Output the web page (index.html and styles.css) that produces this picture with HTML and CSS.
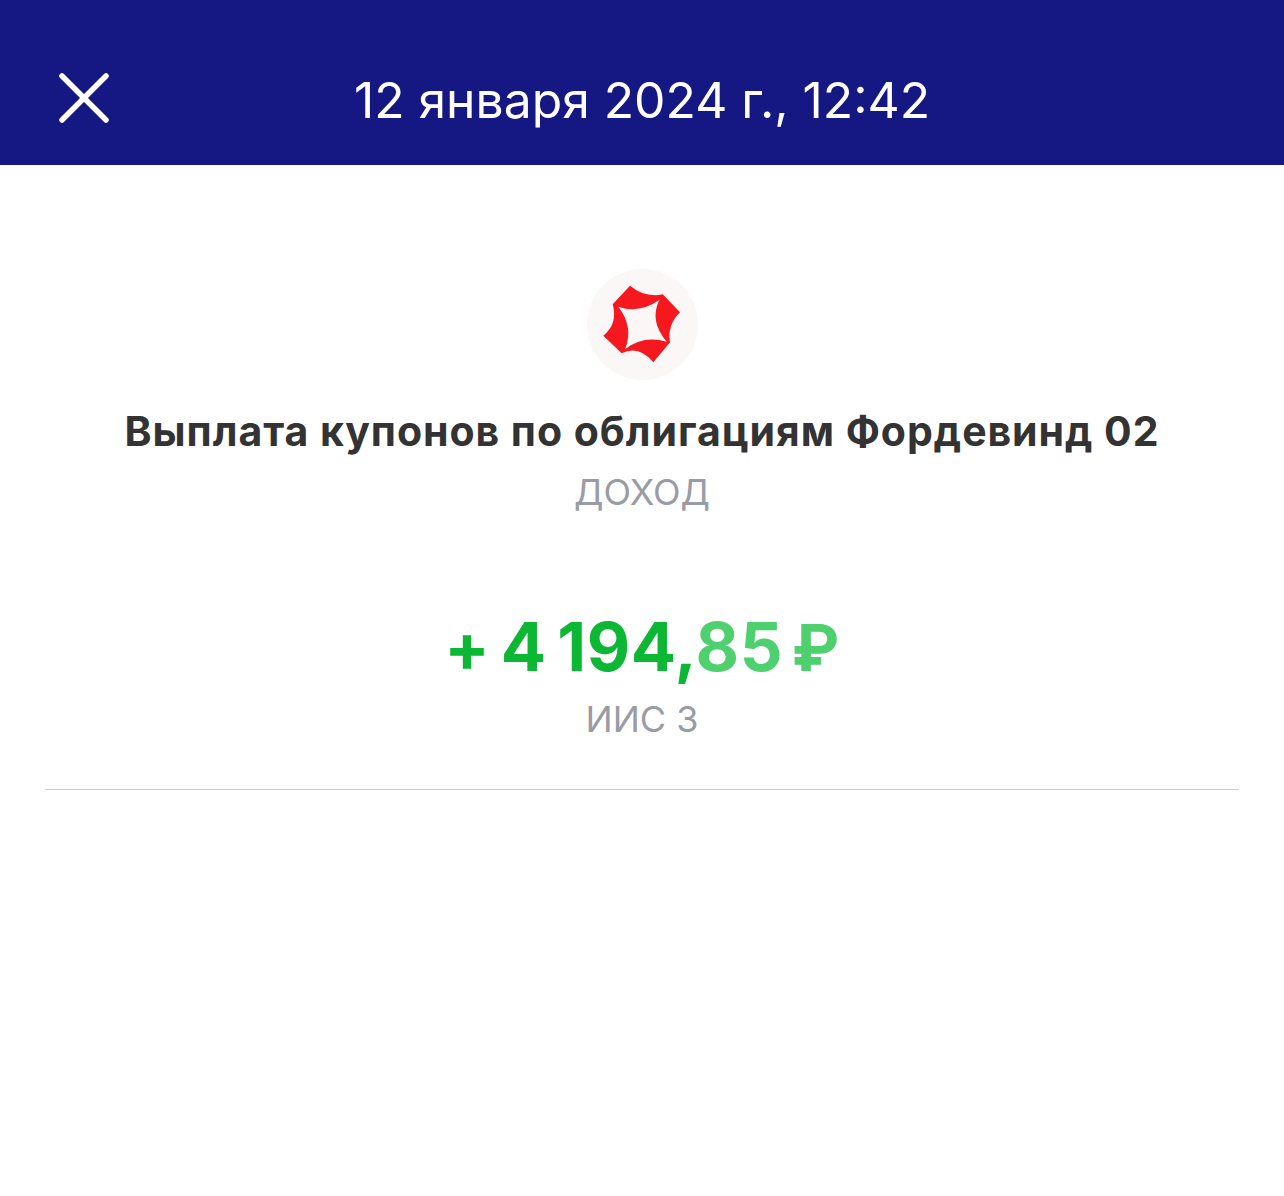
FILE: index.html
```html
<!DOCTYPE html>
<html lang="ru">
<head>
    <meta charset="UTF-8">
    <meta name="viewport" content="width=device-width, initial-scale=1.0">
    <title>Операция</title>
    <link rel="stylesheet" href="styles.css">
</head>
<body>
    <header class="topbar">
        <button class="close-btn" aria-label="Закрыть">
            <svg width="50" height="50" viewBox="0 0 50 50" fill="none" stroke="#fff" stroke-width="5.500" stroke-linecap="round">
                <path d="M3 3 47 47"/>
                <path d="M47 3 3 47"/>
            </svg>
        </button>
        <div class="topbar-title">12 января 2024 г., 12:42</div>
    </header>
    <main class="content">
        <div class="logo">
            <svg width="111" height="111" viewBox="0 0 111 111">
                <path fill="#f5181f" fill-rule="evenodd" d="M43 16.700Q58 29 75.700 25.300L93 43.300Q80 56 83 73.300L66.300 93.300Q52 76 34.700 84.300L16.300 66.700Q31 55 25.700 35.300ZM31.300 37.700Q52 45 72.300 31Q62 52 79.700 72.700Q56 66 38 80.300Q47 58 31.300 37.700Z"/>
            </svg>
        </div>
        <h1 class="op-title">Выплата купонов по облигациям Фордевинд 02</h1>
        <div class="op-type">ДОХОД</div>
        <div class="amount">+ 4 194,<span class="amount-light">85 <span class="currency">₽</span></span></div>
        <div class="account">ИИС 3</div>
        <div class="divider"></div>
    </main>
</body>
</html>
```

FILE: styles.css
```css
body {
    margin: 0;
    background: #fff;
    font-family: Inter, "Liberation Sans", sans-serif;
}

.topbar {
    position: relative;
    box-sizing: border-box;
    height: 165px;
    padding-top: 34px;
    background: #151783;
    display: flex;
    align-items: center;
    justify-content: center;
}

.close-btn {
    position: absolute;
    left: 59px;
    top: 73px;
    width: 50px;
    height: 50px;
    padding: 0;
    border: none;
    background: none;
}

.close-btn svg {
    display: block;
}

.topbar-title {
    color: #fff;
    font-size: 49.800px;
    line-height: 58px;
}

.content {
    display: flex;
    flex-direction: column;
    align-items: center;
    padding: 104px 45px 0;
}

.logo {
    width: 111px;
    height: 111px;
    border-radius: 50%;
    background: #faf7f6;
}

.logo svg {
    display: block;
}

.op-title {
    margin: 27px 0 0;
    font-size: 41px;
    line-height: 48px;
    font-weight: 700;
    letter-spacing: 0.960px;
    color: #333;
}

.op-type {
    margin-top: 15px;
    font-size: 36px;
    line-height: 44px;
    color: #9a9ca5;
}

.amount {
    margin-top: 94px;
    font-size: 67px;
    line-height: 78px;
    font-weight: 700;
    letter-spacing: 0.600px;
    word-spacing: -6px;
    color: #0cb833;
}

.amount-light {
    color: #4fd06e;
}

.currency {
    font-size: 64px;
    line-height: 1;
    margin-left: -2px;
}

.account {
    margin-top: 11px;
    font-size: 36px;
    line-height: 44px;
    color: #9a9ca5;
}

.divider {
    width: 100%;
    height: 1px;
    margin-top: 48px;
    background: #cbcbce;
}
```
